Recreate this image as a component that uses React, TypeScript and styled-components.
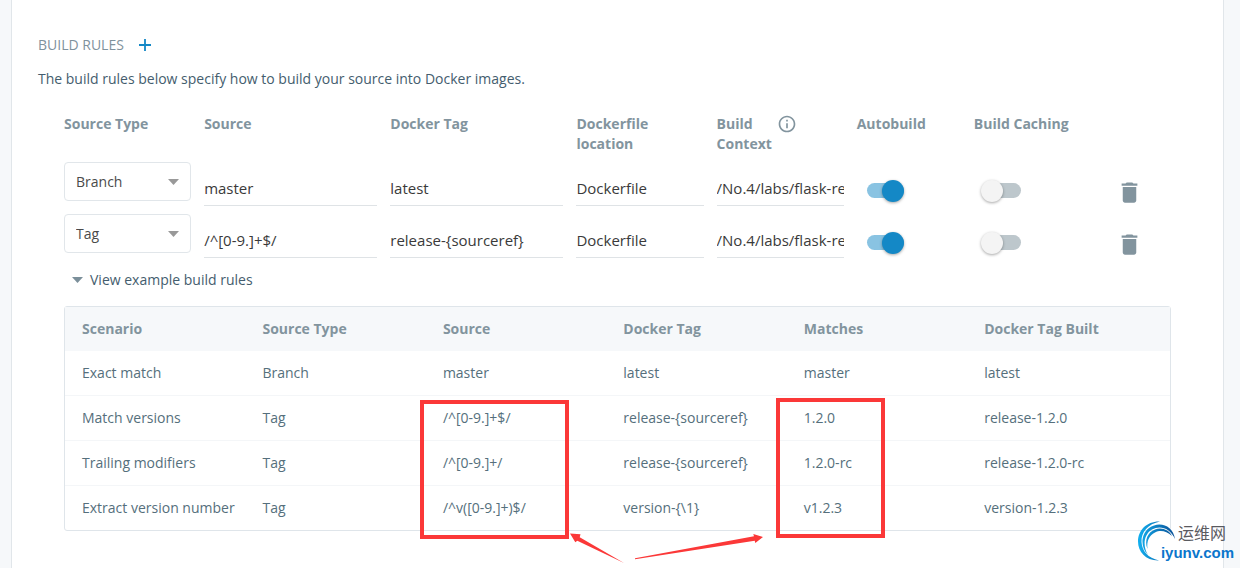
import React, { useState } from "react";
import styled, { createGlobalStyle } from "styled-components";

const GlobalStyle = createGlobalStyle`
  *, *::before, *::after { box-sizing: border-box; }
  body {
    margin: 0;
    background: #f6f8fa;
    color: #445d6e;
    font-family: "Open Sans", "Noto Sans CJK SC", sans-serif;
    font-size: 14px;
    line-height: 20px;
  }
  button, input, select { font: inherit; color: inherit; margin: 0; }
`;

const Page = styled.div`
  position: relative;
  min-height: 100vh;
  padding: 0 16px 0 11px;
  overflow: hidden;
`;

const Card = styled.main`
  min-height: 100vh;
  padding: 35px 26px 37px;
  background: #fff;
  border: solid #e1e6ea;
  border-width: 0 1px;
`;

const TitleRow = styled.header`
  display: flex;
  align-items: center;
  gap: 13px;
`;

const Title = styled.h2`
  margin: 0;
  font-size: 14px;
  font-weight: 400;
  line-height: 20px;
  color: #7f929d;
`;

const IconButton = styled.button`
  display: flex;
  padding: 0;
  border: 0;
  background: none;
  color: #82949e;
  cursor: pointer;
`;

const AddButton = styled(IconButton)`
  color: #1488c6;
`;

const Description = styled.p`
  margin: 14px 0 25px;
`;

const Section = styled.section`
  padding: 0 26px;
`;

const RuleGrid = styled.div`
  display: grid;
  grid-template-columns: 127fr 173fr 173fr 127fr 127fr 104fr 127fr 57fr;
  column-gap: 13px;
`;

const HeadingRow = styled(RuleGrid)`
  margin-bottom: 8px;
  font-weight: 700;
  color: #82949e;
`;

const ContextHeading = styled.div`
  display: flex;
  align-items: flex-start;
`;

const ContextLabel = styled.span`
  width: 60px;
`;

const RuleRow = styled(RuleGrid)`
  height: 52px;
  align-items: start;
`;

const SelectBox = styled.div`
  position: relative;
  display: grid;
`;

const Select = styled.select`
  appearance: none;
  height: 39px;
  padding: 0 28px 0 11px;
  border: 1px solid #e1e6ea;
  border-radius: 4px;
  background: #fff;
  color: #4a4a4a;
`;

const SelectCaret = styled.span`
  position: absolute;
  right: 12px;
  top: 17px;
  display: flex;
  color: #999;
  pointer-events: none;
`;

const TextField = styled.input`
  min-width: 0;
  width: 100%;
  height: 44px;
  padding: 8px 0 0;
  border: 0;
  border-bottom: 1px solid #dfe3e6;
  background: none;
  font-size: 15px;
  color: #3a3a3a;
  outline: none;
`;

const Switch = styled.input`
  appearance: none;
  display: flex;
  align-items: center;
  width: 37px;
  height: 15px;
  margin: 21px 0 0 10px;
  border-radius: 8px;
  background: #bdc7cc;
  cursor: pointer;

  &::before {
    content: "";
    flex: none;
    width: 22px;
    height: 22px;
    margin-left: -3px;
    border-radius: 50%;
    background: #f4f4f4;
    box-shadow: 0 1px 3px rgba(0, 0, 0, 0.35);
  }

  &:checked { background: #89c3e2; }
  &:checked::before { margin-left: 15px; background: #1488c6; }
`;

const DeleteButton = styled(IconButton)`
  margin: 17px 0 0 2px;
`;

const ExamplesToggle = styled.button`
  display: flex;
  align-items: center;
  gap: 7px;
  margin: 4px 0 16px 8px;
  padding: 0;
  border: 0;
  background: none;
  cursor: pointer;

  svg { color: #7b8f9a; }
`;

const ExampleTable = styled.table`
  width: 100%;
  table-layout: fixed;
  border: 1px solid #dfe5ea;
  border-radius: 3px;
  border-spacing: 0;
  color: #556f7c;
`;

const HeadCell = styled.th`
  width: 16.33%;
  height: 44px;
  padding: 0 0 0 17px;
  background: #f6f8fa;
  text-align: left;
  color: #82949e;

  &:last-child { width: auto; }
`;

const Cell = styled.td`
  height: 45px;
  padding: 0 0 0 17px;
  border-bottom: 1px solid #f4f6f8;

  tr:last-child > & { height: 44px; border-bottom: 0; }
`;

const Annotations = styled.svg`
  position: absolute;
  left: 0;
  top: 0;
  pointer-events: none;
`;

const Watermark = styled.div`
  position: absolute;
  right: 6px;
  bottom: 6px;
  display: flex;
  pointer-events: none;
`;

const WatermarkText = styled.div`
  display: flex;
  flex-direction: column;
  margin-left: -17px;
`;

const WatermarkName = styled.span`
  padding-left: 17px;
  color: #5a5a5f;
  font: 400 16px/23px "Noto Sans CJK SC", sans-serif;
`;

const WatermarkSite = styled.span`
  color: #0b76cc;
  font: 700 15px/18px "Liberation Sans", sans-serif;
`;

const Caret = () => (
  <svg width="11" height="6" viewBox="0 0 11 6" fill="currentColor" aria-hidden="true">
    <path d="M0 0h11L5.500 6z" />
  </svg>
);

const sourceTypes = ["Branch", "Tag"];

const initialRules = [
  { type: "Branch", source: "master", tag: "latest", file: "Dockerfile", context: "/No.4/labs/flask-redis", autobuild: true, caching: false },
  { type: "Tag", source: "/^[0-9.]+$/", tag: "release-{sourceref}", file: "Dockerfile", context: "/No.4/labs/flask-redis", autobuild: true, caching: false },
];

const exampleColumns = ["Scenario", "Source Type", "Source", "Docker Tag", "Matches", "Docker Tag Built"];

const examples = [
  ["Exact match", "Branch", "master", "latest", "master", "latest"],
  ["Match versions", "Tag", "/^[0-9.]+$/", "release-{sourceref}", "1.2.0", "release-1.2.0"],
  ["Trailing modifiers", "Tag", "/^[0-9.]+/", "release-{sourceref}", "1.2.0-rc", "release-1.2.0-rc"],
  ["Extract version number", "Tag", "/^v([0-9.]+)$/", "version-{\\1}", "v1.2.3", "version-1.2.3"],
];

export default function App() {
  const [rules, setRules] = useState(initialRules);
  const [open, setOpen] = useState(true);

  const addRule = () =>
    setRules([...rules, { type: "Branch", source: "", tag: "", file: "Dockerfile", context: "/", autobuild: true, caching: false }]);

  return (
    <Page>
      <GlobalStyle />
      <Card>
        <TitleRow>
          <Title>BUILD RULES</Title>
          <AddButton type="button" aria-label="Add build rule" onClick={addRule}>
            <svg width="16" height="16" viewBox="0 0 16 16" stroke="currentColor" strokeWidth="1.800" aria-hidden="true">
              <path d="M8 2v12M2 8h12" />
            </svg>
          </AddButton>
        </TitleRow>
        <Description>The build rules below specify how to build your source into Docker images.</Description>

        <Section>
          <HeadingRow>
            <span>Source Type</span>
            <span>Source</span>
            <span>Docker Tag</span>
            <span>Dockerfile location</span>
            <ContextHeading>
              <ContextLabel>Build Context</ContextLabel>
              <IconButton type="button" aria-label="About build context">
                <svg width="20" height="20" viewBox="0 0 24 24" fill="currentColor" aria-hidden="true">
                  <path d="M11 7h2v2h-2zm0 4h2v6h-2zm1-9C6.480 2 2 6.480 2 12s4.480 10 10 10 10-4.480 10-10S17.520 2 12 2zm0 18c-4.410 0-8-3.590-8-8s3.590-8 8-8 8 3.590 8 8-3.590 8-8 8z" />
                </svg>
              </IconButton>
            </ContextHeading>
            <span>Autobuild</span>
            <span>Build Caching</span>
          </HeadingRow>

          {rules.map((rule, i) => (
            <RuleRow key={i}>
              <SelectBox>
                <Select aria-label="Source Type" defaultValue={rule.type}>
                  {sourceTypes.map((type) => (
                    <option key={type}>{type}</option>
                  ))}
                </Select>
                <SelectCaret>
                  <Caret />
                </SelectCaret>
              </SelectBox>
              <TextField aria-label="Source" defaultValue={rule.source} />
              <TextField aria-label="Docker Tag" defaultValue={rule.tag} />
              <TextField aria-label="Dockerfile location" defaultValue={rule.file} />
              <TextField aria-label="Build Context" defaultValue={rule.context} />
              <Switch type="checkbox" aria-label="Autobuild" defaultChecked={rule.autobuild} />
              <Switch type="checkbox" aria-label="Build Caching" defaultChecked={rule.caching} />
              <DeleteButton type="button" aria-label="Delete rule">
                <svg width="27" height="27" viewBox="0 0 24 24" fill="currentColor" aria-hidden="true">
                  <path d="M6 19c0 1.100.9 2 2 2h8c1.100 0 2-.9 2-2V7H6v12zM19 4h-3.500l-1-1h-5l-1 1H5v2h14V4z" />
                </svg>
              </DeleteButton>
            </RuleRow>
          ))}

          <ExamplesToggle type="button" aria-expanded={open} onClick={() => setOpen(!open)}>
            <Caret />
            View example build rules
          </ExamplesToggle>

          {open && (
            <ExampleTable>
              <thead>
                <tr>
                  {exampleColumns.map((name) => (
                    <HeadCell key={name} scope="col">{name}</HeadCell>
                  ))}
                </tr>
              </thead>
              <tbody>
                {examples.map((row) => (
                  <tr key={row[0]}>
                    {row.map((text, i) => (
                      <Cell key={i}>{text}</Cell>
                    ))}
                  </tr>
                ))}
              </tbody>
            </ExampleTable>
          )}
        </Section>
      </Card>

      <Annotations width="1240" height="568" viewBox="0 0 1240 568" aria-hidden="true">
        <g fill="none" stroke="#fb3838" strokeWidth="4">
          <rect x="422" y="402" width="145" height="135" />
          <rect x="778" y="400" width="105" height="136" />
        </g>
        <g fill="#fb3838">
          <path d="M570 533.500L580.500 534.300L579.700 537.300L624 563L577.300 540.700L575.300 542.300Z" />
          <path d="M763 537L753.300 534L754 536.300L635 558.200V559.200L754.700 540.700L755.300 543Z" />
        </g>
      </Annotations>

      <Watermark>
        <svg width="40" height="41" viewBox="0 0 40 41" aria-hidden="true">
          <defs>
            <linearGradient id="swirl" gradientUnits="userSpaceOnUse" x1="0" y1="20" x2="37" y2="20">
              <stop offset="0" stopColor="#12b0f0" />
              <stop offset="1" stopColor="#0a4f96" />
            </linearGradient>
          </defs>
          <g fill="url(#swirl)">
            <path d="M22 0.500C9 0 0 9 0 20.500C0 31 8 40 21 39.500C10 37 4 30 3.500 21C3 11 10 3 22 0.500Z" />
            <path d="M10 34C2 26 3 13 11 7C21 -0.500 35 4 37 18C32 7 22 4 14 8.500C5.500 13.500 4.500 25 10 34Z" />
            <path d="M9.500 28C6 19 10 11 17 8.500C24 6 31 9 34 15C28 9.500 22 9 17 11.500C11 14.500 8.500 20 9.500 28Z" />
          </g>
        </svg>
        <WatermarkText>
          <WatermarkName>运维网</WatermarkName>
          <WatermarkSite>iyunv.com</WatermarkSite>
        </WatermarkText>
      </Watermark>
    </Page>
  );
}
